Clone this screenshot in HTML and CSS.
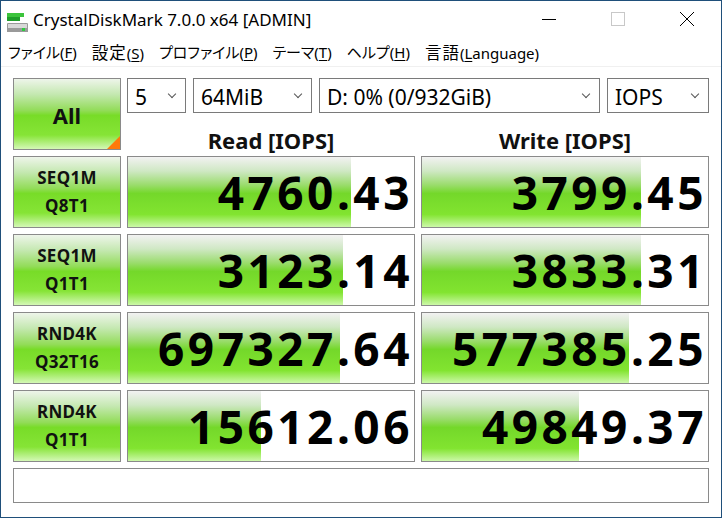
FILE: index.html
```html
<!DOCTYPE html>
<html lang="ja">
<head>
    <meta charset="UTF-8">
    <title>CrystalDiskMark 7.0.0 x64 [ADMIN]</title>
    <link rel="stylesheet" href="styles.css">
</head>
<body>

<div class="window">
    <div class="titlebar">
        <svg class="app-icon" width="24" height="24" viewBox="0 0 24 24">
            <rect x="3" y="5" width="17" height="4" fill="#3cc43c"/>
            <rect x="3" y="9" width="13" height="4" fill="#1f9e2a"/>
            <rect x="3" y="15" width="21" height="10" rx="1" fill="#9a9a9a"/>
            <rect x="4" y="16" width="19" height="4" fill="#d8d8d8"/>
            <rect x="18" y="20" width="3" height="3" fill="#2ecc40"/>
        </svg>
        <span class="title">CrystalDiskMark 7.0.0 x64 [ADMIN]</span>
        <div class="controls">
            <span class="ctl"><svg width="14" height="14" viewBox="0 0 14 14"><line x1="0" y1="7.5" x2="14" y2="7.5" stroke="#000" stroke-width="1"/></svg></span>
            <span class="ctl"><svg width="14" height="14" viewBox="0 0 14 14"><rect x="0.5" y="0.5" width="13" height="13" fill="none" stroke="#c8c8c8" stroke-width="1"/></svg></span>
            <span class="ctl"><svg width="14" height="14" viewBox="0 0 14 14"><path d="M0 0 L14 14 M14 0 L0 14" stroke="#000" stroke-width="1"/></svg></span>
        </div>
    </div>

    <div class="menubar">
        <span>ファイル(<u>F</u>)</span>
        <span><span class="kanji">設定</span>(<u>S</u>)</span>
        <span>プロファイル(<u>P</u>)</span>
        <span>テーマ(<u>T</u>)</span>
        <span>ヘルプ(<u>H</u>)</span>
        <span><span class="kanji">言語</span>(<u>L</u>anguage)</span>
    </div>

    <div class="main">
        <div class="grid">
            <div class="btn all">All<span class="corner"></span></div>
            <div class="top">
                <div class="combos">
                    <div class="combo c-count">5<span class="chev"></span></div>
                    <div class="combo c-size">64MiB<span class="chev"></span></div>
                    <div class="combo c-drive">D: 0% (0/932GiB)<span class="chev"></span></div>
                    <div class="combo c-unit">IOPS<span class="chev"></span></div>
                </div>
                <div class="headers">
                    <div>Read [IOPS]</div>
                    <div>Write [IOPS]</div>
                </div>
            </div>

            <div class="btn label">SEQ1M<br>Q8T1</div>
            <div class="meter"><div class="bar" style="width: 78%"></div><span class="val">4760.43</span></div>
            <div class="meter"><div class="bar" style="width: 76.5%"></div><span class="val">3799.45</span></div>

            <div class="btn label">SEQ1M<br>Q1T1</div>
            <div class="meter"><div class="bar" style="width: 75%"></div><span class="val">3123.14</span></div>
            <div class="meter"><div class="bar" style="width: 76.5%"></div><span class="val">3833.31</span></div>

            <div class="btn label">RND4K<br>Q32T16</div>
            <div class="meter"><div class="bar" style="width: 74%"></div><span class="val">697327.64</span></div>
            <div class="meter"><div class="bar" style="width: 72.5%"></div><span class="val">577385.25</span></div>

            <div class="btn label">RND4K<br>Q1T1</div>
            <div class="meter"><div class="bar" style="width: 46.5%"></div><span class="val">15612.06</span></div>
            <div class="meter"><div class="bar" style="width: 55%"></div><span class="val">49849.37</span></div>
        </div>

        <div class="status"></div>
    </div>
</div>

</body>
</html>
```

FILE: styles.css
```css
body {
    margin: 0;
    font-family: "Noto Sans", "Noto Sans CJK JP", sans-serif;
    background-color: #ffffff;
}
.window {
    width: 720px;
    height: 516px;
    border: 1px solid #1f4f7a;
    background-color: #ffffff;
    display: flex;
    flex-direction: column;
}
.titlebar {
    height: 36px;
    display: flex;
    align-items: center;
    padding-left: 3px;
}
.app-icon {
    margin-top: 2px;
}
.title {
    margin-left: 5px;
    font-size: 17px;
    color: #000;
}
.controls {
    margin-left: auto;
    display: flex;
    height: 100%;
}
.ctl {
    width: 69px;
    display: flex;
    align-items: center;
    justify-content: center;
}
.menubar {
    height: 29px;
    border-bottom: 1px solid #f0f0f0;
    display: flex;
    align-items: center;
    padding-left: 7px;
    gap: 15px;
    font-size: 15px;
    font-feature-settings: "palt";
    color: #000;
}
.menubar .kanji {
    font-size: 16.5px;
    letter-spacing: 1px;
}
.menubar u {
    text-underline-offset: 2px;
}
.main {
    padding: 11px 12px 0 12px;
}
.grid {
    display: grid;
    grid-template-columns: 108px 288px 288px;
    grid-auto-rows: 72px;
    column-gap: 6px;
    row-gap: 6px;
}
.btn {
    box-sizing: border-box;
    border: 1px solid #8a8a8a;
    background: linear-gradient(to bottom, #eef5ea 0%, #c4e8b0 22%, #92dc58 45%, #78dc28 52%, #86e436 80%, #d4f8b6 100%);
    display: flex;
    align-items: center;
    justify-content: center;
    text-align: center;
    font-weight: bold;
    color: #111;
    position: relative;
}
.all {
    font-size: 22px;
    padding-top: 2px;
}
.corner {
    position: absolute;
    right: 0;
    bottom: 0;
    width: 0;
    height: 0;
    border-style: solid;
    border-width: 0 0 13px 13px;
    border-color: transparent transparent #ff7a0a transparent;
}
.label {
    font-size: 17px;
    line-height: 28px;
    letter-spacing: 0.3px;
}
.top {
    grid-column: 2 / 4;
    display: flex;
    flex-direction: column;
}
.combos {
    display: flex;
    gap: 7px;
}
.combo {
    box-sizing: border-box;
    height: 35px;
    border: 1px solid #7a7a7a;
    background: #ffffff;
    font-size: 21px;
    display: flex;
    align-items: center;
    padding-left: 7px;
    padding-right: 10px;
    padding-top: 2px;
    color: #000;
}
.c-count { width: 59px; }
.c-size { width: 119px; }
.c-drive { width: 281px; }
.c-unit { width: 102px; }
.chev {
    margin-left: auto;
    width: 5px;
    height: 5px;
    border-right: 1px solid #555;
    border-bottom: 1px solid #555;
    transform: rotate(45deg);
    margin-top: -6px;
}
.headers {
    flex: 1;
    display: grid;
    grid-template-columns: 288px 288px;
    column-gap: 6px;
    align-items: end;
    font-size: 22px;
    font-weight: bold;
    text-align: center;
    color: #111;
}
.headers div {
    margin-bottom: -5px;
}
.meter {
    box-sizing: border-box;
    border: 1px solid #8a8a8a;
    background: #ffffff;
    position: relative;
    display: flex;
    align-items: center;
    justify-content: flex-end;
    overflow: hidden;
}
.bar {
    position: absolute;
    left: 0;
    top: 0;
    bottom: 0;
    background: linear-gradient(to bottom, #f2f2f2 0%, #cfe8c4 20%, #9adc6c 40%, #74d82a 52%, #82e430 82%, #ccf8a8 100%);
}
.val {
    position: relative;
    font-size: 46px;
    font-weight: bold;
    letter-spacing: 3.5px;
    padding-right: 1px;
    color: #000;
    line-height: 1;
}
.status {
    margin-top: 6px;
    height: 35px;
    box-sizing: border-box;
    border: 1px solid #8a8a8a;
    background: #ffffff;
}
```
